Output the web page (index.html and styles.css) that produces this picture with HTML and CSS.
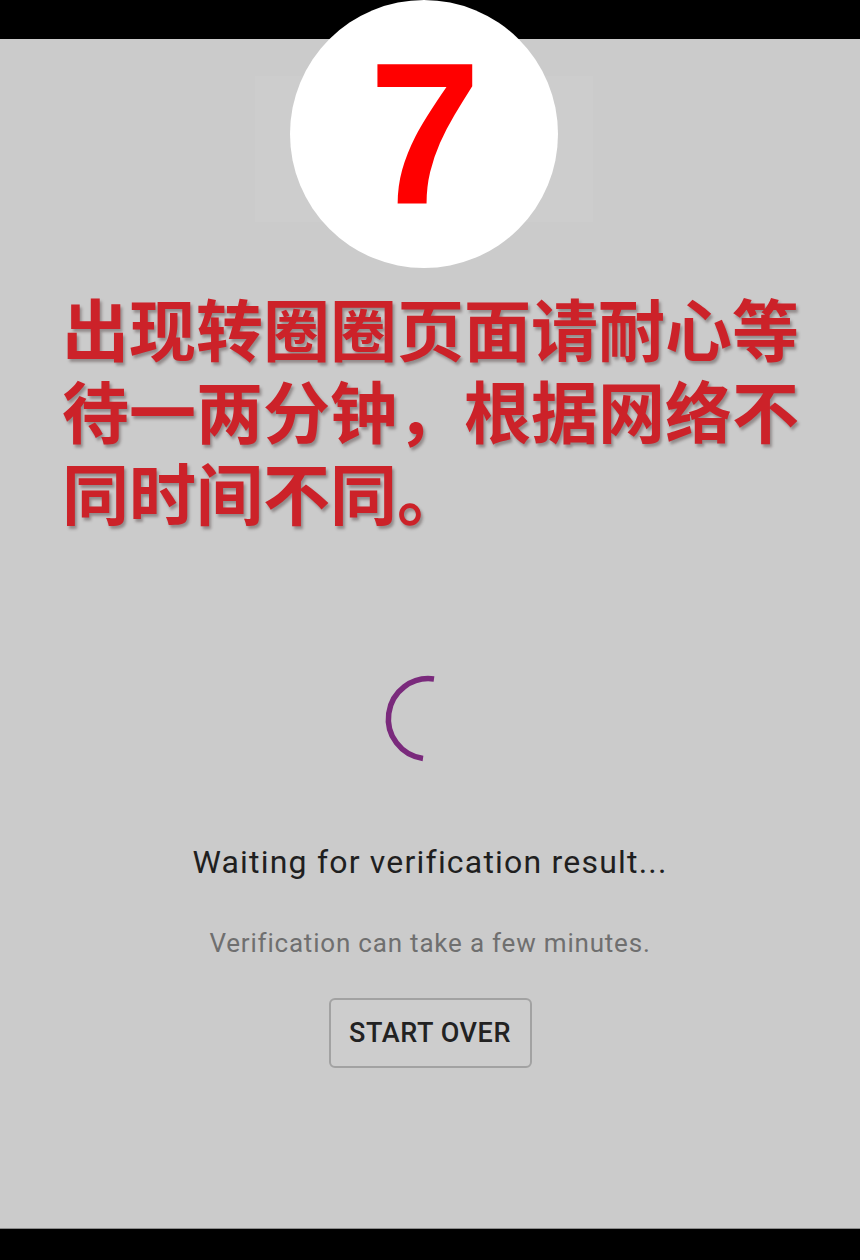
FILE: index.html
```html
<!DOCTYPE html>
<html lang="zh-CN">
<head>
<meta charset="utf-8">
<title>Step 7</title>
<link rel="stylesheet" href="styles.css">
</head>
<body>
<div class="frame">
  <div class="bar-top"></div>
  <main class="screen">
    <div class="ghost"></div>
    <div class="badge"><span class="badge-num">7</span></div>
    <h1 class="note">
      <span class="note-line">出现转圈圈页面请耐心等</span>
      <span class="note-line">待一两分钟，根据网络不</span>
      <span class="note-line">同时间不同。</span>
    </h1>
    <section class="status">
      <svg class="spinner" width="96" height="96" viewBox="0 0 96 96" aria-hidden="true">
        <path d="M53 8 A40 40 0 0 0 42 87.5" fill="none" stroke="#7a2a7c" stroke-width="5.5" stroke-linecap="butt"/>
      </svg>
      <p class="title">Waiting for verification result...</p>
      <p class="sub">Verification can take a few minutes.</p>
      <button class="btn" type="button">START OVER</button>
    </section>
  </main>
  <div class="bar-bottom"></div>
</div>
</body>
</html>
```
FILE: styles.css
```css
html, body {
  margin: 0;
  padding: 0;
  background: #000;
}
.frame {
  position: relative;
  width: 860px;
  height: 1260px;
  display: flex;
  flex-direction: column;
  overflow: hidden;
}
.bar-top {
  height: 39px;
  background: #000;
  flex: none;
}
.bar-bottom {
  height: 31px;
  background: #000;
  flex: none;
  border-top: 1px solid #8a8a8a;
}
.screen {
  flex: 1;
  background: #cbcbcb;
  display: flex;
  flex-direction: column;
}
.ghost {
  position: absolute;
  left: 255px;
  top: 76px;
  width: 338px;
  height: 146px;
  background: #cdcdcd;
}
.badge {
  position: absolute;
  left: 290px;
  top: 0;
  width: 268px;
  height: 268px;
  border-radius: 50%;
  background: #fff;
  display: flex;
  align-items: center;
  justify-content: center;
}
.badge-num {
  font-family: "Liberation Sans", Arial, sans-serif;
  font-weight: 700;
  font-size: 202px;
  line-height: 1;
  color: #ff0000;
  margin-top: 0;
  margin-left: 2px;
}
.note {
  margin: 247px 0 0 0;
  padding: 0 0 0 62px;
  font-family: "Noto Sans CJK SC", "Noto Sans", sans-serif;
  font-weight: 700;
  font-size: 67px;
  line-height: 82px;
  color: #cc2229;
  text-shadow: 2px 3px 3px rgba(40, 20, 20, 0.35);
  letter-spacing: 0;
}
.note-line {
  display: block;
  height: 82px;
  white-space: nowrap;
}
.status {
  display: flex;
  flex-direction: column;
  align-items: center;
}
.spinner {
  margin-top: 139px;
  margin-left: -2px;
  display: block;
}
.title {
  margin: 77px 0 0 0;
  font-family: Roboto, "Liberation Sans", sans-serif;
  font-size: 32px;
  line-height: 36px;
  letter-spacing: 1.2px;
  color: #1f1f1f;
}
.sub {
  margin: 48px 0 0 0;
  font-family: Roboto, "Liberation Sans", sans-serif;
  font-size: 26px;
  line-height: 30px;
  letter-spacing: 0.8px;
  color: #6f6f6f;
}
.btn {
  margin-top: 40px;
  width: 203px;
  height: 70px;
  border: 2px solid #a2a2a2;
  border-radius: 6px;
  background: #cdcdcd;
  font-family: Roboto, "Liberation Sans", sans-serif;
  font-weight: 500;
  font-size: 27px;
  color: #222;
  padding: 0;
  letter-spacing: 0.6px;
}
```
